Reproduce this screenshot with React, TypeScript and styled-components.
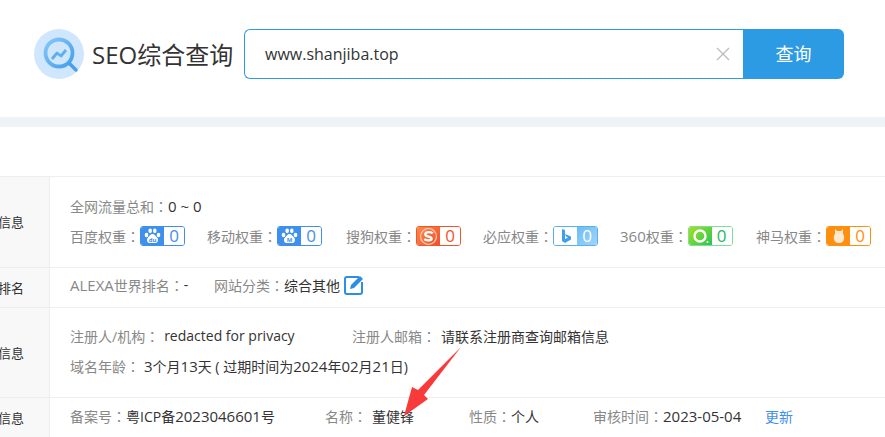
import React from "react";
import styled, { createGlobalStyle } from "styled-components";

const Global = createGlobalStyle`
  html, body { margin: 0; padding: 0; background: #fff; overflow: hidden; }
  body { font-family: "Open Sans", "Noto Sans CJK SC", sans-serif; font-size: 14px; color: #333; }
`;
const Page = styled.div`width: 885px; height: 437px; overflow: hidden; position: relative;`;
const Header = styled.header`height: 117px; box-sizing: border-box; padding: 29px 0 0 34px; display: flex; align-items: flex-start;`;
const Brand = styled.div`width: 210px; height: 50px; display: flex; align-items: center; gap: 8px;`;
const BrandText = styled.span`font-size: 24px; color: #333; white-space: nowrap; margin-bottom: 2px;`;
const Search = styled.div`width: 600px; height: 50px; display: flex;`;
const InputBox = styled.div`flex: 1; box-sizing: border-box; border: 1px solid #2d9ae4; border-right: 0; border-radius: 6px 0 0 6px; display: flex; align-items: center; justify-content: space-between; padding: 0 13px 0 20px;`;
const InputText = styled.span`font-size: 16px; color: #333;`;
const Submit = styled.div`width: 101px; background: #2d9ae4; color: #fff; border-radius: 0 6px 6px 0; font-size: 18px; display: flex; align-items: center; justify-content: center; padding-bottom: 2px; box-sizing: border-box;`;
const Band = styled.div`height: 10px; background: #f0f3f6;`;
const Gap = styled.div`height: 49px;`;
const Row = styled.div<{ $h: number }>`height: ${p => p.$h}px; border-top: 1px solid #eeeeee; display: flex;`;
const Head = styled.div<{ $pb?: number }>`width: 50px; box-sizing: border-box; background: #f8f8f8; border-right: 1px solid #eeeeee; display: flex; align-items: center; justify-content: flex-end; overflow: hidden; font-size: 13px; color: #333; white-space: nowrap; padding: 0 25px ${p => p.$pb || 0}px 0;`;
const Body = styled.div<{ $pb: number }>`flex: 1; padding: 0 0 ${p => p.$pb}px 20px; display: flex; flex-direction: column; justify-content: center; gap: 10px;`;
const Line = styled.div`display: flex; align-items: center; height: 20px; font-size: 14px; color: #333; white-space: nowrap;`;
const Field = styled.span<{ $w?: number }>`display: inline-flex; align-items: center; ${p => p.$w ? `width: ${p.$w}px;` : ""}`;
const Label = styled.span`color: #888;`;
const Colon = styled.span<{ $gap?: number }>`color: #888; font-family: "Noto Sans CJK TC", sans-serif; margin-right: ${p => p.$gap || 0}px;`;
const Latin = styled.span`font-size: 15px;`;
const Link = styled.span`color: #3f8fec;`;
const Badge = styled.span<{ $c: string }>`display: inline-flex; width: 45px; height: 20px; box-sizing: border-box; border: 1px solid ${p => p.$c}; border-radius: 3px;`;
const BadgeIcon = styled.span<{ $bg: string }>`width: 23px; background: ${p => p.$bg}; border-radius: 2px 0 0 2px; display: flex; align-items: center; justify-content: center;`;
const BadgeNum = styled.span<{ $c: string; $bg?: string }>`flex: 1; display: flex; align-items: center; justify-content: center; font-size: 17px; line-height: 18px; color: ${p => p.$c}; background: ${p => p.$bg || "#fff"}; border-radius: 0 2px 2px 0;`;
const Arrow = styled.svg`position: absolute; left: 400px; top: 345px;`;

const Paw = ({ t }: { t: string }) => (
  <svg width="19" height="18" viewBox="0 0 18 18">
    <g fill="#fff">
      <ellipse cx="3" cy="8" rx="1.800" ry="2.200" /><ellipse cx="6.700" cy="3.800" rx="1.800" ry="2.400" />
      <ellipse cx="11.300" cy="3.800" rx="1.800" ry="2.400" /><ellipse cx="15" cy="8" rx="1.800" ry="2.200" />
      <path d="M9 7c2 0 3 2 4.500 3.500 1.800 1.800 1 5.500-1.500 5.500H6c-2.500 0-3.300-3.700-1.500-5.500C6 9 7 7 9 7z" />
    </g>
    <text x="9" y="14.500" fontSize="6" fontWeight="700" textAnchor="middle" fill="#3f8fec">{t}</text>
  </svg>
);

const L = ({ children, gap }: { children: React.ReactNode; gap?: number }) => (
  <><Label>{children}</Label><Colon $gap={gap}>：</Colon></>
);

export default function App() {
  return (
    <Page>
      <Global />
      <Header>
        <Brand>
          <svg width="50" height="50" viewBox="0 0 50 50">
            <defs><linearGradient id="ring" x1="0" y1="0" x2="1" y2="1"><stop offset="0" stopColor="#86c6f8" /><stop offset="1" stopColor="#459fe9" /></linearGradient></defs>
            <circle cx="25" cy="25" r="25" fill="#cfe6fd" />
            <circle cx="25" cy="24" r="13.500" fill="none" stroke="url(#ring)" strokeWidth="3.800" />
            <path d="M36 35l6 6" stroke="#4a9fe8" strokeWidth="3.400" strokeLinecap="round" />
            <path d="M18 30l5-6 4 3 5-6" fill="none" stroke="#5cb0f2" strokeWidth="2.800" strokeLinejoin="round" />
          </svg>
          <BrandText>SEO综合查询</BrandText>
        </Brand>
        <Search>
          <InputBox>
            <InputText>www.shanjiba.top</InputText>
            <svg width="14" height="14" viewBox="0 0 14 14"><path d="M1 1l12 12M13 1L1 13" stroke="#bbb" strokeWidth="1.200" /></svg>
          </InputBox>
          <Submit>查询</Submit>
        </Search>
      </Header>
      <Band />
      <Gap />
      <Row $h={90}>
        <Head $pb={2}>信息</Head>
        <Body $pb={2}>
          <Line><L>全网流量总和</L><Latin>0 ~ 0</Latin></Line>
          <Line>
            <Field $w={137}><L>百度权重</L><Badge $c="#3f8fec"><BadgeIcon $bg="#3f8fec"><Paw t="du" /></BadgeIcon><BadgeNum $c="#3f8fec">0</BadgeNum></Badge></Field>
            <Field $w={139}><L>移动权重</L><Badge $c="#3f8fec"><BadgeIcon $bg="#3f8fec"><Paw t="M" /></BadgeIcon><BadgeNum $c="#3f8fec">0</BadgeNum></Badge></Field>
            <Field $w={137}><L>搜狗权重</L><Badge $c="#f0562a"><BadgeIcon $bg="linear-gradient(135deg,#ff8a4a,#f0502a)">
              <svg width="19" height="19" viewBox="0 0 18 18"><circle cx="9" cy="9" r="7.500" fill="none" stroke="#ffd9c8" strokeWidth="1" /><path d="M13 6c-1-1.500-7-2-7 .8 0 3 6 1.500 6 4.200 0 2.500-5 2-7 .5" fill="none" stroke="#fff" strokeWidth="2.200" /></svg>
            </BadgeIcon><BadgeNum $c="#f0562a">0</BadgeNum></Badge></Field>
            <Field $w={137}><L>必应权重</L><Badge $c="#5ab0ee"><BadgeIcon $bg="#fff">
              <svg width="14" height="16" viewBox="0 0 14 16"><path d="M3 1l3 1v9l3-1.500-2-1-1-2.500 6 2.500v3L6 15l-3-2z" fill="#3f9fe8" /></svg>
            </BadgeIcon><BadgeNum $c="#fff" $bg="linear-gradient(135deg,#6dbcf4,#a0d6fb)">0</BadgeNum></Badge></Field>
            <Field $w={136}><L><Latin>360</Latin>权重</L><Badge $c="#7fdc9c"><BadgeIcon $bg="linear-gradient(135deg,#a4e21e,#2cc456)">
              <svg width="19" height="18" viewBox="0 0 18 18"><circle cx="8.500" cy="9" r="5.500" fill="none" stroke="#fff" strokeWidth="2.400" /><circle cx="16" cy="15" r="1" fill="#fff" /></svg>
            </BadgeIcon><BadgeNum $c="#24b860">0</BadgeNum></Badge></Field>
            <Field><L>神马权重</L><Badge $c="#ff8f0f"><BadgeIcon $bg="#ff8f0f">
              <svg width="14" height="16" viewBox="0 0 14 16"><path d="M3 1l2 2h4l2-2v5c2 2 2 9-4 9S1 8 3 6z" fill="#ffe9cf" /></svg>
            </BadgeIcon><BadgeNum $c="#ff8f0f">0</BadgeNum></Badge></Field>
          </Line>
        </Body>
      </Row>
      <Row $h={39}>
        <Head>排名</Head>
        <Body $pb={6}>
          <Line>
            <Field $w={144}><L><Latin>ALEXA</Latin>世界排名</L>-</Field>
            <Field><L>网站分类</L>综合其他
              <svg style={{ marginLeft: 4 }} width="20" height="20" viewBox="0 0 20 20"><path d="M15 2H3a2 2 0 0 0-2 2v13a2 2 0 0 0 2 2h13a2 2 0 0 0 2-2V7" fill="none" stroke="#2d8fe4" strokeWidth="2" /><path d="M16 1l3 3-9 9-4 1 1-4z" fill="#2d8fe4" /></svg>
            </Field>
          </Line>
        </Body>
      </Row>
      <Row $h={89}>
        <Head>信息</Head>
        <Body $pb={4}>
          <Line>
            <Field $w={282}><L gap={5}>注册人/机构</L>redacted for privacy</Field>
            <Field><L gap={5}>注册人邮箱</L>请联系注册商查询邮箱信息</Field>
          </Line>
          <Line><L gap={4}>域名年龄</L><Latin>3</Latin>个月<Latin>13</Latin>天 ( 过期时间为<Latin>2024</Latin>年<Latin>02</Latin>月<Latin>21</Latin>日)</Line>
        </Body>
      </Row>
      <Row $h={39}>
        <Head>信息</Head>
        <Body $pb={4}>
          <Line>
            <Field $w={255}><L>备案号</L>粤ICP备<Latin>2023046601</Latin>号</Field>
            <Field $w={144}><L gap={5}>名称</L>董健锋</Field>
            <Field $w={124}><L>性质</L>个人</Field>
            <Field $w={172}><L>审核时间</L><Latin>2023-05-04</Latin></Field>
            <Link>更新</Link>
          </Line>
        </Body>
      </Row>
      <Arrow width="62" height="73" viewBox="0 0 62 73">
        <path d="M61 2L18 45l-6-3-8 29 24-17-4-4z" fill="#f93a3a" />
      </Arrow>
    </Page>
  );
}
